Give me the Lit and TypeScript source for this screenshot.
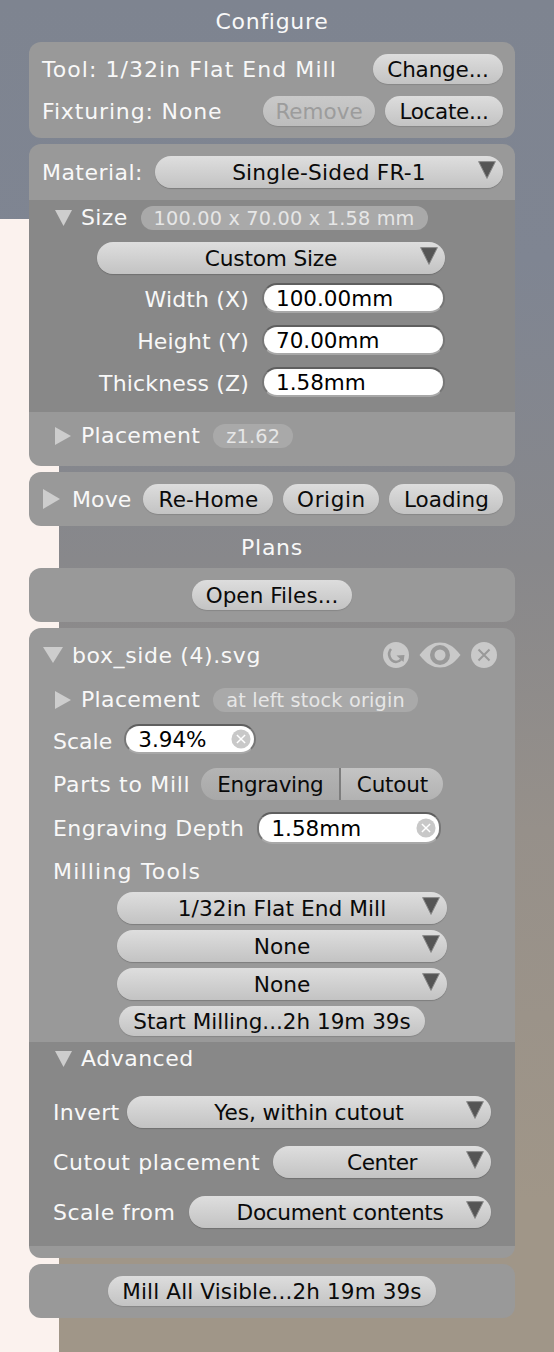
import { LitElement, html, css, svg } from "lit";
import { customElement } from "lit/decorators.js";

const tri = (dir: "down" | "right", cls: string) =>
  html`<svg class="tri ${cls}" viewBox="0 0 20 20" preserveAspectRatio="none">
    ${dir === "down" ? svg`<polygon points="0,0 20,0 10,20" fill="#cdcdcd" />` : svg`<polygon points="0,0 20,10 0,20" fill="#cdcdcd" />`}
  </svg>`;

const sel = (label: string, cls: string) =>
  html`<div class="select ${cls}">
    <span>${label}</span>
    <svg class="arrow" viewBox="0 0 18 18"><polygon points="0.6,0.6 17.4,0.6 9,17.4" fill="#555" stroke="#8c8c8c" stroke-width="1" /></svg>
  </div>`;

const btn = (label: string, cls = "") => html`<div class="btn ${cls}">${label}</div>`;

const clear = html`<svg class="clear" viewBox="0 0 22 22">
  <circle cx="11" cy="11" r="10.5" fill="#c8c8c8" />
  <path d="M6.5 6.5 L15.5 15.5 M15.5 6.5 L6.5 15.5" stroke="#fff" stroke-width="1.6" />
</svg>`;

@customElement("app-root")
export class AppRoot extends LitElement {
  static styles = css`
    :host {
      display: block;
      width: 554px;
      height: 1352px;
      overflow: hidden;
      box-sizing: border-box;
      padding-left: 29px;
      font-family: "DejaVu Sans", sans-serif;
      font-size: 22px;
      color: #f8f8f8;
      background:
        linear-gradient(#fbf2ee, #fbf2ee) 0 219px / 59px 1133px no-repeat,
        linear-gradient(180deg, #7e8490 0, #7f8592 260px, #88888b 560px, #96908a 830px, #a09688 1200px);
    }
    * { box-sizing: border-box; }
    .page { width: 486px; }
    .title { height: 42px; display: flex; align-items: center; justify-content: center; letter-spacing: 0.7px; }
    .title.plans { letter-spacing: 0.7px; }
    .panel { background: #999; border-radius: 12px; overflow: hidden; margin-bottom: 6px; }
    .pad { padding: 12px 12px 12px 13px; }
    .row { display: flex; align-items: center; white-space: nowrap; }
    .h30 { height: 30px; }
    .mt12 { margin-top: 12px; }
    .spread { justify-content: space-between; }
    .tool { letter-spacing: 1.05px; }
    .fix { letter-spacing: 0.85px; }
    .mat { letter-spacing: 0.45px; }
    .push { margin-left: auto; }
    .btn {
      height: 30px; border-radius: 15px; flex: none;
      display: flex; align-items: center; justify-content: center;
      color: #0a0a0a; font-size: 21.5px; white-space: nowrap;
      background: linear-gradient(#dddddd, #c3c3c3);
      box-shadow: 0 1px 1px rgba(0,0,0,.12);
    }
    .btn.tight { letter-spacing: -0.15px; }
    .btn.tighter { letter-spacing: -0.3px; }
    .btn.wide { letter-spacing: 0.2px; }
    .btn.off { color: #9c9c9c; background: linear-gradient(#c9c9c9, #bdbdbd); }
    .w-change { width: 130px; }
    .w-remove { width: 112px; }
    .w-locate { width: 118px; margin-left: 10px; }
    .w-home { width: 130px; margin-left: 12px; }
    .w-origin { width: 96px; margin-left: 10px; letter-spacing: 0.6px; }
    .w-loading { width: 114px; margin-left: 10px; }
    .w-open { width: 160px; letter-spacing: 0.05px; }
    .w-start { width: 306px; margin: 6px 0 0 90px; }
    .w-all { width: 328px; letter-spacing: 0.14px; }
    .select {
      position: relative; height: 32px; border-radius: 16px; flex: none;
      display: flex; align-items: center; justify-content: center;
      color: #0a0a0a; font-size: 21.7px; white-space: nowrap; letter-spacing: 0;
      background: linear-gradient(#dedede, #c3c3c3);
      box-shadow: 0 1px 1px rgba(0,0,0,.18);
    }
    .arrow { position: absolute; right: 7px; top: 5px; width: 18px; height: 18px; }
    .s-mat { width: 348px; margin-left: auto; letter-spacing: 0.2px; }
    .s-size { width: 348px; margin: 12px 0 0 68px; letter-spacing: -0.2px; }
    .s-tool { width: 330px; margin: 6px 0 0 88px; }
    .s-tool.first { margin-top: 8px; letter-spacing: 0.05px; }
    .s-inv { width: 364px; margin-left: auto; letter-spacing: -0.1px; }
    .s-cut { width: 218px; margin-left: auto; letter-spacing: -0.5px; }
    .s-from { width: 302px; margin-left: auto; letter-spacing: -0.4px; }
    .dark { background: #888; }
    .size-sec { height: 212px; padding-top: 6px; }
    .disc { height: 24px; display: flex; align-items: center; white-space: nowrap; letter-spacing: 0.35px; }
    .disc.size { padding-left: 26px; }
    .disc .name { position: relative; top: -1px; }
    .tri { display: block; flex: none; }
    .t-size { width: 17px; height: 16px; margin-right: 9px; }
    .t-place { width: 16px; height: 18px; margin-right: 10px; }
    .t-move { width: 17px; height: 20px; margin-right: 12px; }
    .t-file { width: 20px; height: 16px; margin-right: 9px; }
    .pill {
      height: 24px; border-radius: 12px; padding: 0 13px; margin-left: 13px;
      display: flex; align-items: center; white-space: nowrap;
      font-size: 19.25px; letter-spacing: 0.2px; color: #e6e6e6; background: #a9a9a9;
    }
    .fields {
      display: grid; grid-template-columns: 220px 183px; column-gap: 13px; row-gap: 12px;
      margin-top: 9px; align-items: center;
    }
    .fields label { text-align: right; letter-spacing: 0.15px; padding-top: 2px; }
    .input {
      position: relative; height: 30px; border-radius: 15px; background: #fff; color: #000;
      display: flex; align-items: center; padding-left: 12px; font-size: 21.5px; flex: none; letter-spacing: 0;
      border: 2px solid #a8a8a8; border-top-color: #5f5f5f; border-left-color: #777; border-right-color: #777;
    }
    .clear { position: absolute; right: 3px; top: 3px; width: 20px; height: 20px; }
    .place-sec { height: 54px; padding: 12px 0 0 26px; }
    .move { padding: 12px 12px 12px 14px; margin-bottom: 0; }
    .move .lbl { letter-spacing: 0.1px; }
    .plan { padding-bottom: 12px; margin-bottom: 6px; }
    .plan-head { height: 26px; margin-top: 14px; padding: 0 0 0 14px; display: flex; align-items: center; white-space: nowrap; letter-spacing: 0.6px; }
    .icons { margin-left: auto; display: flex; align-items: center; padding-right: 18px; letter-spacing: 0; }
    .icons svg { display: block; }
    .ic { width: 26px; height: 26px; }
    .eye { width: 42px; height: 26px; margin: 0 10px; }
    .plan .disc.place { margin-top: 20px; padding-left: 26px; }
    .f { display: flex; align-items: center; white-space: nowrap; padding: 0 24px; letter-spacing: 0.3px; }
    .f-scale { margin-top: 12px; height: 30px; letter-spacing: 0; }
    .f-scale .lbl { position: relative; top: 2px; }
    .i-scale { width: 132px; margin-left: 12px; }
    .i-depth { width: 184px; margin-left: 13px; height: 32px; }
    .i-depth .clear { top: 4px; }
    .f-parts { margin-top: 14px; height: 32px; letter-spacing: 0.7px; }
    .seg { display: flex; height: 32px; margin-left: 11px; border-radius: 16px; overflow: hidden; color: #0a0a0a; font-size: 21.5px; letter-spacing: 0; }
    .seg div { display: flex; align-items: center; justify-content: center; }
    .seg .a { width: 138px; letter-spacing: -0.3px; background: linear-gradient(#b4b4b4, #a8a8a8); }
    .seg .b { width: 104px; letter-spacing: -0.2px; background: linear-gradient(#c4c4c4, #b2b2b2); border-left: 2px solid #7d7d7d; }
    .f-depth { margin-top: 12px; height: 32px; letter-spacing: 0.4px; }
    .f-tools { margin-top: 14px; height: 26px; letter-spacing: 1.2px; }
    .adv { height: 204px; margin-top: 6px; padding-top: 5px; }
    .adv .disc { padding-left: 26px; letter-spacing: 0.5px; }
    .a1 { margin-top: 25px; height: 32px; }
    .a2 { margin-top: 18px; height: 32px; }
    .a-cut { letter-spacing: 0.6px; }
    .a-from { letter-spacing: 0.5px; }
    .bottom { padding: 12px; display: flex; justify-content: center; }
  `;

  render() {
    return html`<div class="page">
      <div class="title">Configure</div>

      <div class="panel pad">
        <div class="row h30 spread"><span class="tool">Tool: 1/32in Flat End Mill</span>${btn("Change...", "w-change tight")}</div>
        <div class="row h30 mt12"><span class="fix">Fixturing: None</span><span class="push"></span>${btn("Remove", "off w-remove")}${btn("Locate...", "w-locate tighter")}</div>
      </div>

      <div class="panel">
        <div class="row pad"><span class="mat">Material:</span>${sel("Single-Sided FR-1", "s-mat")}</div>
        <div class="dark size-sec">
          <div class="disc size">${tri("down", "t-size")}<span class="name">Size</span><div class="pill">100.00 x 70.00 x 1.58 mm</div></div>
          ${sel("Custom Size", "s-size")}
          <div class="fields">
            <label>Width (X)</label><div class="input">100.00mm</div>
            <label>Height (Y)</label><div class="input">70.00mm</div>
            <label>Thickness (Z)</label><div class="input">1.58mm</div>
          </div>
        </div>
        <div class="place-sec"><div class="disc">${tri("right", "t-place")}<span class="name">Placement</span><div class="pill">z1.62</div></div></div>
      </div>

      <div class="panel row move">
        ${tri("right", "t-move")}<span class="lbl">Move</span>
        ${btn("Re-Home", "w-home wide")}${btn("Origin", "w-origin")}${btn("Loading", "w-loading")}
      </div>

      <div class="title plans">Plans</div>

      <div class="panel bottom">${btn("Open Files...", "w-open")}</div>

      <div class="panel plan">
        <div class="plan-head">
          ${tri("down", "t-file")}box_side (4).svg
          <div class="icons">
            <svg class="ic" viewBox="0 0 26 26">
              <circle cx="13" cy="13" r="13" fill="#c9c9c9" />
              <path d="M8 7 A8 8 0 0 0 13 20 A7.5 7.5 0 0 0 18 17.5" fill="none" stroke="#999" stroke-width="2.6" />
              <path d="M21.5 13 L20.5 20 L13.5 13.5 Z" fill="#999" />
            </svg>
            <svg class="eye" viewBox="0 0 42 26">
              <path d="M0.5 13 C8 3.5 14 0.5 21 0.5 C28 0.5 34 3.5 41.5 13 C34 22.5 28 25.5 21 25.5 C14 25.5 8 22.5 0.5 13 Z" fill="#c9c9c9" />
              <circle cx="21" cy="13" r="10" fill="#999" />
              <circle cx="21" cy="13" r="5.5" fill="#c9c9c9" />
            </svg>
            <svg class="ic" viewBox="0 0 26 26">
              <circle cx="13" cy="13" r="13" fill="#c9c9c9" />
              <path d="M7.5 7.5 L18.5 18.5 M18.5 7.5 L7.5 18.5" stroke="#999" stroke-width="2" />
            </svg>
          </div>
        </div>
        <div class="disc place">${tri("right", "t-place")}<span class="name">Placement</span><div class="pill">at left stock origin</div></div>
        <div class="f f-scale"><span class="lbl">Scale</span><div class="input i-scale">3.94%${clear}</div></div>
        <div class="f f-parts">Parts to Mill<div class="seg"><div class="a">Engraving</div><div class="b">Cutout</div></div></div>
        <div class="f f-depth">Engraving Depth<div class="input i-depth">1.58mm${clear}</div></div>
        <div class="f f-tools">Milling Tools</div>
        ${sel("1/32in Flat End Mill", "s-tool first")}
        ${sel("None", "s-tool")}
        ${sel("None", "s-tool")}
        ${btn("Start Milling...2h 19m 39s", "w-start")}
        <div class="dark adv">
          <div class="disc">${tri("down", "t-size")}<span class="name">Advanced</span></div>
          <div class="f a1">Invert${sel("Yes, within cutout", "s-inv")}</div>
          <div class="f a2 a-cut">Cutout placement${sel("Center", "s-cut")}</div>
          <div class="f a2 a-from">Scale from${sel("Document contents", "s-from")}</div>
        </div>
      </div>

      <div class="panel bottom">${btn("Mill All Visible...2h 19m 39s", "w-all")}</div>
    </div>`;
  }
}
